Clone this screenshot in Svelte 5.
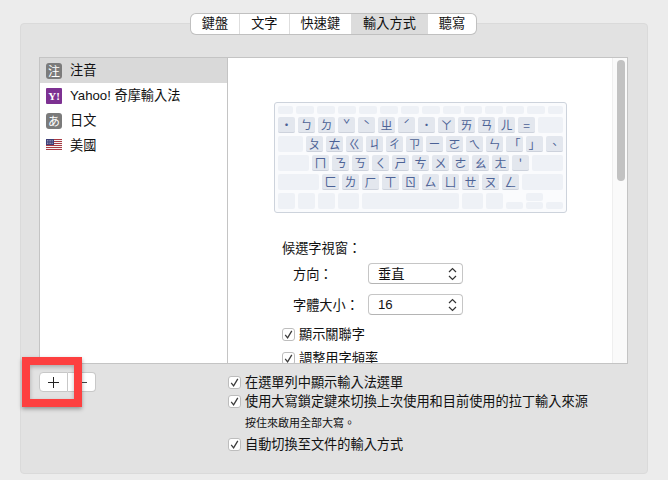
<script>
  const tabs = ['鍵盤', '文字', '快速鍵', '輸入方式', '聽寫'];
  const sources = [
    { name: '注音', icon: 'zhu', mark: '注' },
    { name: 'Yahoo! 奇摩輸入法', icon: 'yahoo', mark: 'Y!' },
    { name: '日文', icon: 'kana', mark: 'あ' },
    { name: '美國', icon: 'flag' }
  ];
  const fnRow = [15, ...Array(12).fill(18), 15];
  const rows = [
    { before: 0, keys: '·ㄅㄉˇˋㄓˊ˙ㄚㄞㄢㄦ=', after: 25 },
    { before: 25, keys: 'ㄆㄊㄍㄐㄔㄗㄧㄛㄟㄣ「」、', after: 0 },
    { before: 31, keys: "ㄇㄋㄎㄑㄕㄘㄨㄜㄠㄤ'", after: 31 },
    { before: 41, keys: 'ㄈㄌㄏㄒㄖㄙㄩㄝㄡㄥ', after: 41 }
  ];
  const spaceRow = [17, 17, 17, 21, 97, 21, 17];
  const stripes = [0, 2, 4, 6, 8, 10];
</script>

{#snippet check()}
  <span class="check">
    <svg width="13" height="13" viewBox="0 0 13 13"><path d="M3.2 6.8 5.6 9.8 9.8 2.8" fill="none" stroke="#3c3c3c" stroke-width="1.3" /></svg>
  </span>
{/snippet}

{#snippet chevrons()}
  <svg width="9" height="14" viewBox="0 0 9 14"><path d="M1 5 4.5 1.5 8 5M1 9 4.5 12.5 8 9" fill="none" stroke="#333" stroke-width="1.2" /></svg>
{/snippet}

<div class="panel">
  <div class="tabs">
    {#each tabs as tab, i}
      <div class="tab" class:active={i === 3}>{tab}</div>
    {/each}
  </div>

  <div class="box">
    <div class="list">
      {#each sources as s, i}
        <div class="source" class:selected={i === 0}>
          {#if s.icon === 'flag'}
            <svg class="flag" width="16" height="11" viewBox="0 0 16 11">
              <rect width="16" height="11" fill="#f4f4f4" />
              {#each stripes as y}
                <rect {y} width="16" height="1" fill="#a83a44" />
              {/each}
              <rect width="8" height="6" fill="#3d3f78" />
              <path d="M1 1.5h6M1 3h6M1 4.5h6" stroke="#c5c6dc" stroke-width=".6" stroke-dasharray="1 .6" />
            </svg>
          {:else}
            <span class="badge {s.icon}">{s.mark}</span>
          {/if}
          <span>{s.name}</span>
        </div>
      {/each}
    </div>

    <div class="pane">
      <div class="keyboard">
        <div class="row fn">
          {#each fnRow as w}
            <span class="key faint" style="width:{w}px"></span>
          {/each}
        </div>
        {#each rows as row}
          <div class="row">
            {#if row.before}<span class="key faint" style="width:{row.before}px"></span>{/if}
            {#each row.keys as k}
              <span class="key">{k}</span>
            {/each}
            {#if row.after}<span class="key faint" style="width:{row.after}px"></span>{/if}
          </div>
        {/each}
        <div class="row">
          {#each spaceRow as w}
            <span class="key faint" style="width:{w}px"></span>
          {/each}
          <span class="arrow low"><span class="key faint half"></span></span>
          <span class="arrow"><span class="key faint half"></span><span class="key faint half"></span></span>
          <span class="arrow low"><span class="key faint half"></span></span>
        </div>
      </div>

      <div class="options">
        <div class="heading">候選字視窗：</div>
        <div class="field">
          <span class="label">方向：</span>
          <div class="select"><span>垂直</span>{@render chevrons()}</div>
        </div>
        <div class="field">
          <span class="label">字體大小：</span>
          <div class="select"><span>16</span>{@render chevrons()}</div>
        </div>
        <div class="opt first">{@render check()}<span>顯示關聯字</span></div>
        <div class="opt">{@render check()}<span>調整用字頻率</span></div>
      </div>

      <div class="scrollbar"><div class="thumb"></div></div>
    </div>
  </div>

  <div class="bottom">
    <div class="buttons">
      <div class="btn plus">
        <svg width="11" height="11" viewBox="0 0 11 11"><path d="M5.5 0v11M0 5.5h11" stroke="#222" stroke-width="1" /></svg>
      </div>
      <div class="btn minus">
        <svg width="11" height="11" viewBox="0 0 11 11"><path d="M0 5.5h11" stroke="#444" stroke-width="1" /></svg>
      </div>
      <div class="highlight"></div>
    </div>
    <div class="prefs">
      <div class="pref">{@render check()}<span>在選單列中顯示輸入法選單</span></div>
      <div class="pref">{@render check()}<span>使用大寫鎖定鍵來切換上次使用和目前使用的拉丁輸入來源</span></div>
      <div class="hint">按住來啟用全部大寫。</div>
      <div class="pref">{@render check()}<span>自動切換至文件的輸入方式</span></div>
    </div>
  </div>
</div>

<style>
  :global(body) {
    margin: 0;
    background: #ececec;
    font-family: "Liberation Sans", "Noto Sans CJK TC", sans-serif;
    font-size: 13.2px;
    color: #111;
  }

  .panel {
    box-sizing: border-box;
    width: 628px;
    height: 451px;
    margin: 23px 0 0 20px;
    padding: 0 19px 0 18px;
    background: #e2e2e2;
    border: 1px solid #dadada;
    border-radius: 4px;
  }

  .tabs {
    display: flex;
    width: fit-content;
    height: 20px;
    margin: -10px auto 0;
    background: #fff;
    border-radius: 5px;
    box-shadow: 0 0 0 1px #c0c0c0;
    overflow: hidden;
  }

  .tab {
    display: flex;
    align-items: center;
    justify-content: center;
    padding: 0 11px;
    border-left: 1px solid #dedede;
    line-height: 20px;
  }
  .tab:first-child { border-left: 0; }
  .tab.active { background: #dcdcdc; border-left: 0; padding: 0 12px; }
  .tab.active + .tab { border-left: 0; }

  .box {
    display: flex;
    height: 307px;
    margin-top: 23px;
    box-sizing: border-box;
    background: #fff;
    border: 1px solid #c4c4c4;
  }

  .list {
    flex: none;
    width: 187px;
    border-right: 1px solid #c4c4c4;
  }

  .source {
    display: flex;
    align-items: center;
    gap: 8px;
    height: 25px;
    padding-left: 6px;
  }
  .source > span:last-child { position: relative; top: -1px; }
  .source.selected { background: #d9d9d9; }

  .badge {
    display: flex;
    align-items: center;
    justify-content: center;
    width: 16px;
    height: 16px;
    border-radius: 3px;
    color: #fff;
    font-size: 12px;
    background: #7b7b7b;
  }
  .badge.yahoo {
    background: #7d3192;
    border-radius: 1px;
    font-family: "Liberation Serif", serif;
    font-weight: bold;
    font-size: 11px;
  }

  .flag { margin-bottom: 3px; }

  .pane {
    position: relative;
    flex: 1;
    overflow: hidden;
    padding: 44px 0 0 46px;
  }

  .keyboard {
    box-sizing: border-box;
    display: flex;
    flex-direction: column;
    gap: 3px;
    width: 293px;
    height: 111px;
    padding: 3px;
    background: #fafbfd;
    border: 1px solid #cdd3dc;
    border-radius: 3px;
  }

  .row {
    display: flex;
    gap: 3px;
    height: 16px;
  }
  .row.fn { height: 8px; }

  .key {
    display: flex;
    flex: none;
    align-items: center;
    justify-content: center;
    box-sizing: border-box;
    width: 17px;
    height: 16px;
    background: #e3e7ee;
    border-bottom: 1px solid #cdd2dc;
    border-radius: 2px;
    font-family: "Noto Sans CJK TC", sans-serif;
    font-size: 12px;
    line-height: 1;
    color: #4c6296;
  }
  .key.faint {
    height: 100%;
    background: #eef1f6;
    border-bottom: 0;
  }

  .arrow {
    display: flex;
    flex-direction: column;
    gap: 1px;
    width: 17px;
  }
  .arrow.low { justify-content: flex-end; }
  .key.half { width: 17px; height: 7.5px; }

  .options {
    margin: 0 0 0 8px;
    padding-top: 26px;
  }

  .heading {
    height: 20px;
    line-height: 20px;
  }

  .field {
    display: flex;
    align-items: center;
    height: 21px;
    margin-top: 4px;
    padding-left: 11px;
  }
  .field + .field { margin-top: 10px; }

  .label { width: 75px; }

  .select {
    box-sizing: border-box;
    display: flex;
    align-items: center;
    justify-content: space-between;
    width: 95px;
    height: 21px;
    padding: 0 5px 0 9px;
    background: #fff;
    border: 1px solid #c6c6c6;
    border-bottom-color: #b4b4b4;
    border-radius: 4px;
  }

  .opt {
    display: flex;
    align-items: center;
    gap: 4px;
    height: 19px;
    margin-top: 5px;
  }
  .opt.first { margin-top: 10px; }
  .opt > span:last-child { position: relative; top: -1px; }

  .check {
    box-sizing: border-box;
    display: block;
    flex: none;
    width: 13px;
    height: 13px;
    background: #fff;
    border: 1px solid #bdbdbd;
    border-radius: 3px;
  }
  .check svg { display: block; margin: -1px; }

  .scrollbar {
    position: absolute;
    top: 0;
    right: 0;
    bottom: 0;
    width: 14px;
    background: #fafafa;
    border-left: 1px solid #efefef;
  }

  .thumb {
    width: 8px;
    height: 121px;
    margin: 2px 0 0 4px;
    background: #c2c2c2;
    border-radius: 4px;
  }

  .bottom {
    display: flex;
    margin-top: 8px;
  }

  .buttons {
    position: relative;
    display: flex;
    flex: none;
    width: 57px;
    height: 20px;
    margin-right: 132px;
  }

  .btn {
    box-sizing: border-box;
    display: flex;
    align-items: center;
    justify-content: center;
    height: 20px;
    background: #fff;
    border: 1px solid #c8c8c8;
  }
  .btn svg { display: block; }
  .plus { width: 29px; border-radius: 4px 0 0 4px; }
  .minus { width: 28px; border-left: 0; border-radius: 0 4px 4px 0; }

  .highlight {
    position: absolute;
    left: -17px;
    top: -15px;
    box-sizing: border-box;
    width: 60px;
    height: 50px;
    border: 8px solid #fd4040;
    box-shadow: 0 2px 4px rgba(0, 0, 0, 0.35), inset 0 2px 4px rgba(0, 0, 0, 0.25);
  }

  .prefs { padding-top: 1px; }

  .pref {
    display: flex;
    align-items: center;
    gap: 4px;
    height: 19px;
  }
  .pref > span:last-child { position: relative; top: -1px; }

  .hint {
    height: 24px;
    line-height: 24px;
    padding-left: 17px;
    font-size: 11px;
  }
</style>
